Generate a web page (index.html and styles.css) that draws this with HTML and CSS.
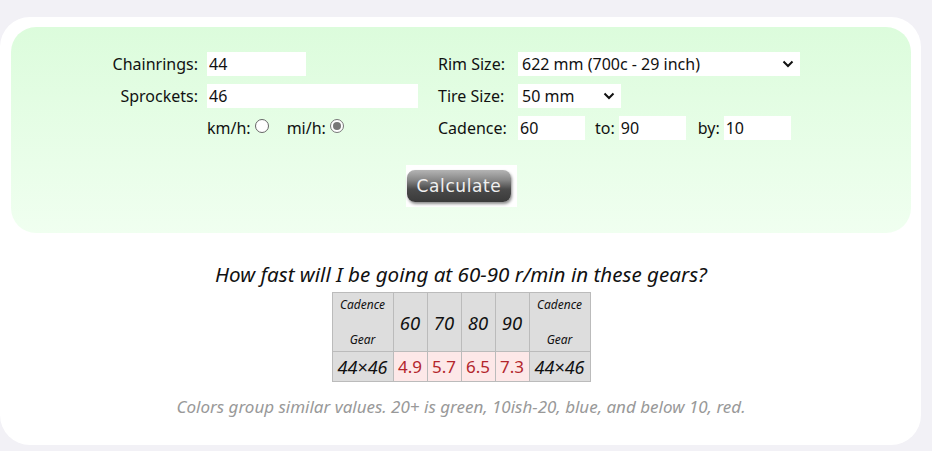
FILE: index.html
```html
<!DOCTYPE html>
<html>
<head>
<meta charset="utf-8">
<link rel="stylesheet" href="styles.css">
</head>
<body>
<div class="card">
  <div class="panel">
    <div class="form">
      <label class="lbl">Chainrings:</label>
      <div class="cell"><input class="in w-chain" type="text" value="44"></div>
      <label class="lbl2">Rim Size:</label>
      <div class="cell"><div class="sel w-rim"><span>622 mm (700c - 29 inch)</span><svg class="chev" width="12" height="8" viewBox="0 0 12 8"><path d="M1.5 1.5 L6 6 L10.5 1.5" fill="none" stroke="#111" stroke-width="2"/></svg></div></div>

      <label class="lbl">Sprockets:</label>
      <div class="cell"><input class="in w-spr" type="text" value="46"></div>
      <label class="lbl2">Tire Size:</label>
      <div class="cell"><div class="sel w-tire"><span>50 mm</span><svg class="chev" width="12" height="8" viewBox="0 0 12 8"><path d="M1.5 1.5 L6 6 L10.5 1.5" fill="none" stroke="#111" stroke-width="2"/></svg></div></div>

      <span></span>
      <div class="cell units">
        <span>km/h:</span><span class="radio"></span>
        <span class="mi">mi/h:</span><span class="radio on"></span>
      </div>
      <label class="lbl2">Cadence:</label>
      <div class="cell cad">
        <input class="in w-cad" type="text" value="60">
        <span class="to">to:</span>
        <input class="in w-cad" type="text" value="90">
        <span class="by">by:</span>
        <input class="in w-cad" type="text" value="10">
      </div>
    </div>
    <div class="btnrow">
      <div class="btnbox"><div class="btn">Calculate</div></div>
    </div>
  </div>

  <h2 class="q">How fast will I be going at 60-90 r/min in these gears?</h2>
  <table class="res">
    <tr class="head">
      <th class="cg"><div>Cadence</div><div>Gear</div></th>
      <th class="n">60</th>
      <th class="n">70</th>
      <th class="n">80</th>
      <th class="n">90</th>
      <th class="cg"><div>Cadence</div><div>Gear</div></th>
    </tr>
    <tr class="body">
      <th class="g">44×46</th>
      <td class="red">4.9</td>
      <td class="red">5.7</td>
      <td class="red">6.5</td>
      <td class="red">7.3</td>
      <th class="g">44×46</th>
    </tr>
  </table>
  <p class="note">Colors group similar values. 20+ is green, 10ish-20, blue, and below 10, red.</p>
</div>
</body>
</html>
```

FILE: styles.css
```css
html, body {
  margin: 0;
  padding: 0;
}
body {
  background: #f2f1f6;
  font-family: "Noto Sans", "Open Sans", sans-serif;
  color: #111;
  width: 932px;
  height: 451px;
  overflow: hidden;
}
.card {
  margin: 17px 11px 0 0;
  height: 408px;
  background: #fff;
  border-radius: 30px;
  padding: 10px 10px 10px 11px;
}
.panel {
  height: 206px;
  box-sizing: border-box;
  border-radius: 25px;
  background: linear-gradient(#dcfcdc, #f0fff0);
  padding: 25px 0 0 87px;
}
.form {
  display: grid;
  grid-template-columns: 109px 231px 80px auto;
  column-gap: 0;
  row-gap: 8px;
  font-size: 16px;
  align-items: center;
}
.lbl {
  text-align: right;
  padding-right: 9px;
}
.cell {
  display: flex;
  align-items: center;
  height: 24px;
}
.in {
  border: none;
  outline: none;
  background: #fff;
  height: 24px;
  box-sizing: border-box;
  padding: 0 2px;
  font: inherit;
  font-size: 16px;
  color: #111;
  margin: 0;
}
.w-chain { width: 99px; }
.w-spr { width: 211px; }
.w-cad { width: 67px; }
.sel {
  position: relative;
  background: #fff;
  height: 24px;
  display: flex;
  align-items: center;
  padding-left: 4px;
  box-sizing: border-box;
}
.w-rim { width: 282px; }
.w-tire { width: 103px; }
.chev {
  position: absolute;
  right: 6px;
  top: 8px;
}
.mi { margin-left: 18px; }
.radio {
  width: 12px;
  height: 12px;
  border: 1px solid #666;
  border-radius: 50%;
  background: #fff;
  margin-left: 4px;
  box-sizing: content-box;
  position: relative;
  top: -2px;
}
.radio.on {
  border-color: #777;
}
.radio.on::after {
  content: "";
  position: absolute;
  left: 2px;
  top: 2px;
  width: 8px;
  height: 8px;
  border-radius: 50%;
  background: #777;
}
.to { margin: 0 4px 0 10px; }
.by { margin: 0 4px 0 12px; }
.btnrow {
  display: flex;
  justify-content: center;
  margin-top: 25px;
  padding-right: 87px;
}
.btnbox {
  width: 111px;
  height: 42px;
  background: #fff;
  display: flex;
  align-items: center;
  justify-content: center;
}
.btn {
  width: 104px;
  height: 32px;
  border-radius: 8px;
  background: linear-gradient(#b4b4b4 0%, #8a8a8a 30%, #4a4a4a 60%, #3a3a3a 100%);
  box-shadow: 1px 2px 3px rgba(0,0,0,0.45);
  color: #f0f0f0;
  font-family: "DejaVu Sans", sans-serif;
  font-size: 17px;
  letter-spacing: 0.6px;
  display: flex;
  align-items: center;
  justify-content: center;
  margin-right: 4px;
}
.q {
  margin: 27px 0 4px;
  text-align: center;
  font-size: 20.6px;
  font-weight: normal;
  font-style: italic;
  color: #111;
}
.res {
  margin: 0 auto;
  border-collapse: collapse;
  border: 1px solid #bbb;
}
.res th, .res td {
  border: 1px solid #bbb;
  padding: 0;
  font-weight: normal;
  text-align: center;
  box-sizing: border-box;
}
.res .head th {
  background: #ddd;
  height: 59px;
}
.res .cg {
  font-size: 12px;
  font-style: italic;
  width: 61px;
}
.cg div:first-child { margin-bottom: 18px; }
.res .n {
  font-size: 18.5px;
  font-style: italic;
  width: 34px;
}
.g {
  background: #ddd;
  font-size: 18px;
  font-style: italic;
  height: 30px;
}
.red {
  background: #fde8e8;
  color: #b3262c;
  font-size: 17px;
}
.note {
  margin: 13px 0 0;
  text-align: center;
  font-style: italic;
  color: #999;
  font-size: 17px;
}
```
